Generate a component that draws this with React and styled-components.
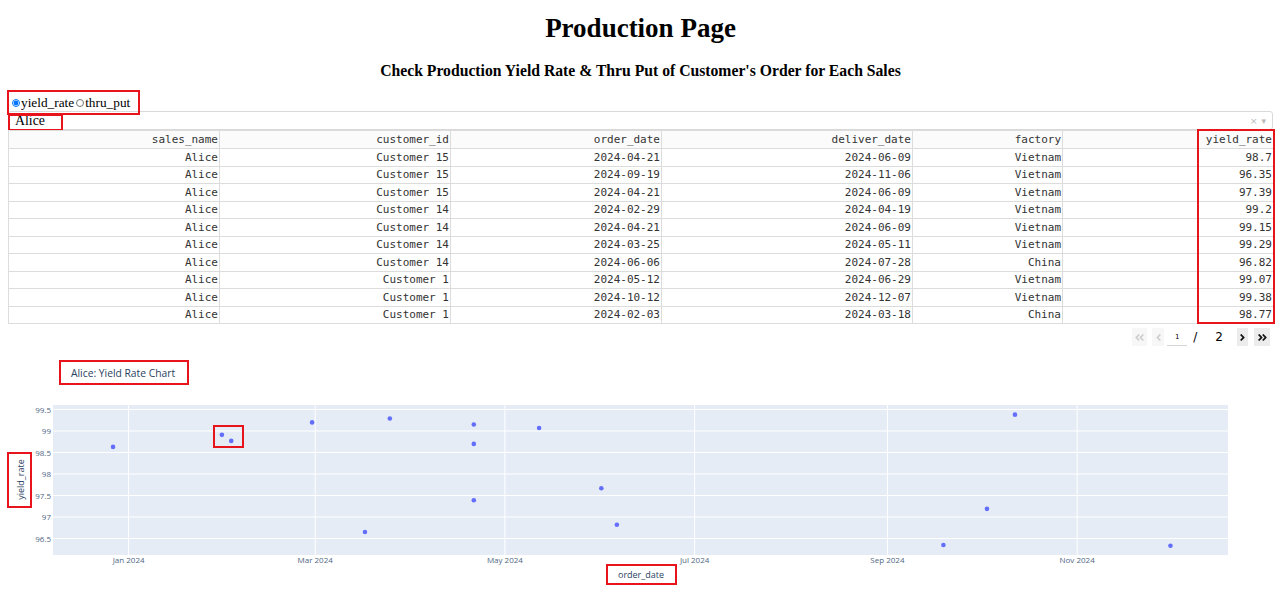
import styled, { createGlobalStyle, css } from "styled-components";
import { FaAngleDoubleLeft, FaAngleLeft, FaAngleRight, FaAngleDoubleRight } from "react-icons/fa";

const GlobalStyle = createGlobalStyle`
  body {
    margin: 0;
    background: #fff;
    font-family: "Liberation Serif", "Times New Roman", serif;
    color: #000;
  }
`;

// red annotation frame drawn over an element
const marked = css`
  position: relative;
  &::after {
    content: '';
    position: absolute;
    border: 2px solid #e8141b;
    pointer-events: none;
    top: ${({ $box }) => $box[0]}px;
    right: ${({ $box }) => $box[1]}px;
    bottom: ${({ $box }) => $box[2]}px;
    left: ${({ $box }) => $box[3]}px;
  }
`;

const Page = styled.div`
  padding: 0 7px 0 8px;
`;

const Title = styled.h1`
  margin: 0;
  padding-top: 12px;
  font-size: 27px;
  line-height: 32px;
  text-align: center;
`;

const Subtitle = styled.h3`
  margin: 17px 0 0;
  font-size: 15.7px;
  line-height: 20px;
  text-align: center;
`;

const RadioGroup = styled.div`
  ${marked};
  display: inline-flex;
  align-items: center;
  margin: 13px 0 0 2px;
  height: 17px;
  font-size: 13.3px;
`;

const RadioLabel = styled.label`
  display: inline-flex;
  align-items: center;
`;

const Radio = styled.input`
  width: 8px;
  height: 8px;
  margin: 0 1px 0 2px;
`;

const Dropdown = styled.div`
  display: flex;
  align-items: center;
  height: 19px;
  box-sizing: border-box;
  border: 1px solid #d9d9d9;
  border-radius: 3px;
  padding-left: 6px;
  font-size: 13.8px;
`;

const Value = styled.span`
  ${marked};
  line-height: 17px;
`;

const Controls = styled.span`
  margin-left: auto;
  display: flex;
  align-items: center;
  gap: 4px;
  padding-right: 6px;
  color: #b8b8b8;
  font-family: "DejaVu Sans", sans-serif;
  font-size: 9px;
`;

const TableWrap = styled.div`
  position: relative;
`;

const ColumnMark = styled.div`
  position: absolute;
  top: -1px;
  bottom: 0;
  right: -2px;
  width: 78px;
  box-sizing: border-box;
  border: 2px solid #e8141b;
  pointer-events: none;
`;

const Table = styled.table`
  width: 100%;
  table-layout: fixed;
  border-collapse: collapse;
  font-family: "DejaVu Sans Mono", "Liberation Mono", monospace;
  font-size: 11px;
  color: #333;
`;

const Cell = styled.td`
  border: 1px solid #dcdcdc;
  padding: 0 1px 0 0;
  height: ${({ $head }) => ($head ? 17 : 16.5)}px;
  line-height: 15px;
  text-align: right;
  white-space: nowrap;
  font-weight: 400;
  background: ${({ $head }) => ($head ? "#fbfbfb" : "#fff")};
`;

const Pager = styled.div`
  display: flex;
  justify-content: flex-end;
  align-items: center;
  margin-top: 4px;
  height: 18px;
  padding-right: 3px;
`;

const PageButton = styled.span`
  display: flex;
  align-items: center;
  justify-content: center;
  width: ${({ $w }) => $w}px;
  height: 18px;
  margin-left: ${({ $gap }) => $gap}px;
  background: ${({ $off }) => ($off ? "#f7f7f7" : "#ececec")};
  color: ${({ $off }) => ($off ? "#cfcfcf" : "#111")};
  font-size: 11px;
`;

const PageInput = styled.span`
  width: 20px;
  margin-left: 3px;
  border-bottom: 1px solid #d5d5d5;
  text-align: center;
  font-family: "DejaVu Sans", sans-serif;
  font-size: 7px;
  line-height: 16px;
`;

const PageText = styled.span`
  font-family: "DejaVu Sans", sans-serif;
  font-size: 12px;
  margin-left: ${({ $gap }) => $gap}px;
`;

const ChartBox = styled.svg`
  display: block;
  overflow: visible;
  margin-top: 4px;
`;

const columns = [
  ["sales_name", 211],
  ["customer_id", 231],
  ["order_date", 211],
  ["deliver_date", 251],
  ["factory", 150],
  ["yield_rate", 211],
];

const rows = [
  ["Alice", "Customer 15", "2024-04-21", "2024-06-09", "Vietnam", "98.7"],
  ["Alice", "Customer 15", "2024-09-19", "2024-11-06", "Vietnam", "96.35"],
  ["Alice", "Customer 15", "2024-04-21", "2024-06-09", "Vietnam", "97.39"],
  ["Alice", "Customer 14", "2024-02-29", "2024-04-19", "Vietnam", "99.2"],
  ["Alice", "Customer 14", "2024-04-21", "2024-06-09", "Vietnam", "99.15"],
  ["Alice", "Customer 14", "2024-03-25", "2024-05-11", "Vietnam", "99.29"],
  ["Alice", "Customer 14", "2024-06-06", "2024-07-28", "China", "96.82"],
  ["Alice", "Customer 1", "2024-05-12", "2024-06-29", "Vietnam", "99.07"],
  ["Alice", "Customer 1", "2024-10-12", "2024-12-07", "Vietnam", "99.38"],
  ["Alice", "Customer 1", "2024-02-03", "2024-03-18", "China", "98.77"],
];

// rows of the second page too
const extra = [
  ["2023-12-27", 98.63],
  ["2024-01-31", 98.91],
  ["2024-03-17", 96.65],
  ["2024-06-01", 97.67],
  ["2024-10-03", 97.19],
  ["2024-12-01", 96.33],
];

const points = [...rows.map((r) => [r[2], parseFloat(r[5])]), ...extra];

const DAY = 86400000;
const JAN = Date.UTC(2024, 0, 1);
const px = (d) => 128.6 + ((Date.parse(d) - JAN) / DAY) * 3.11;
const py = (v) => 430 - (v - 99) * 43;

const plot = { x0: 53, x1: 1228, y0: 404, y1: 554 };
const xTicks = [
  ["Jan 2024", "2024-01-01"],
  ["Mar 2024", "2024-03-01"],
  ["May 2024", "2024-05-01"],
  ["Jul 2024", "2024-07-01"],
  ["Sep 2024", "2024-09-01"],
  ["Nov 2024", "2024-11-01"],
];
const yTicks = [96.5, 97, 97.5, 98, 98.5, 99, 99.5];

function Chart() {
  const top = 349;
  const mark = { fill: "none", stroke: "#e8141b", strokeWidth: 2 };
  const tick = { fontFamily: "Open Sans, sans-serif", fontSize: 8, fill: "#506784" };
  return (
    <ChartBox width="1265" height={592 - top}>
      <g transform={`translate(-8 ${-top})`}>
        <text x="71" y="375.5" fontFamily="Open Sans, sans-serif" fontSize="10.3" fill="#2a3f5f">
          Alice: Yield Rate Chart
        </text>
        <rect x="60" y="360" width="128" height="23" {...mark} />

        <rect x={plot.x0} y={plot.y0} width={plot.x1 - plot.x0} height={plot.y1 - plot.y0} fill="#e5ecf6" />
        {yTicks.map((v) => (
          <g key={v}>
            <line x1={plot.x0} x2={plot.x1} y1={py(v)} y2={py(v)} stroke="#fff" strokeWidth="1" />
            <text x="51" y={py(v) + 3} textAnchor="end" {...tick}>{v}</text>
          </g>
        ))}
        {xTicks.map(([label, d]) => (
          <g key={d}>
            <line x1={px(d)} x2={px(d)} y1={plot.y0} y2={plot.y1} stroke="#fff" strokeWidth="1" />
            <text x={px(d)} y="561.5" textAnchor="middle" {...tick}>{label}</text>
          </g>
        ))}
        {points.map(([d, v], i) => (
          <circle key={i} cx={px(d)} cy={py(v)} r="2.3" fill="#636efa" />
        ))}

        <text
          transform="translate(23.5 478.5) rotate(-90)"
          textAnchor="middle"
          fontFamily="Open Sans, sans-serif"
          fontSize="9"
          fill="#2a3f5f"
        >
          yield_rate
        </text>
        <rect x="8" y="452" width="23" height="54" {...mark} />
        <text x="641" y="576.5" textAnchor="middle" fontFamily="Open Sans, sans-serif" fontSize="9" fill="#2a3f5f">
          order_date
        </text>
        <rect x="607" y="564" width="69" height="19" {...mark} />
        <rect x="214" y="425" width="29" height="21" {...mark} />
      </g>
    </ChartBox>
  );
}

export default function App() {
  return (
    <Page>
      <GlobalStyle />
      <Title>Production Page</Title>
      <Subtitle>Check Production Yield Rate &amp; Thru Put of Customer's Order for Each Sales</Subtitle>
      <RadioGroup $box={[-4, -10, -4, -3]}>
        <RadioLabel>
          <Radio type="radio" name="metric" defaultChecked />
          yield_rate
        </RadioLabel>
        <RadioLabel>
          <Radio type="radio" name="metric" />
          thru_put
        </RadioLabel>
      </RadioGroup>
      <Dropdown>
        <Value $box={[2, -18, -2, -7]}>Alice</Value>
        <Controls>
          <span>×</span>
          <span>▾</span>
        </Controls>
      </Dropdown>
      <TableWrap>
        <Table>
          <colgroup>
            {columns.map(([name, w]) => (
              <col key={name} style={{ width: w }} />
            ))}
          </colgroup>
          <thead>
            <tr>
              {columns.map(([name]) => (
                <Cell as="th" key={name} $head>
                  {name}
                </Cell>
              ))}
            </tr>
          </thead>
          <tbody>
            {rows.map((r, i) => (
              <tr key={i}>
                {r.map((c, j) => (
                  <Cell key={j}>{c}</Cell>
                ))}
              </tr>
            ))}
          </tbody>
        </Table>
        <ColumnMark />
      </TableWrap>
      <Pager>
        <PageButton $off $w={15} $gap={0}><FaAngleDoubleLeft /></PageButton>
        <PageButton $off $w={12} $gap={5}><FaAngleLeft /></PageButton>
        <PageInput>1</PageInput>
        <PageText $gap={6}>/</PageText>
        <PageText $gap={18}>2</PageText>
        <PageButton $w={11} $gap={14}><FaAngleRight /></PageButton>
        <PageButton $w={16} $gap={6}><FaAngleDoubleRight /></PageButton>
      </Pager>
      <Chart />
    </Page>
  );
}
